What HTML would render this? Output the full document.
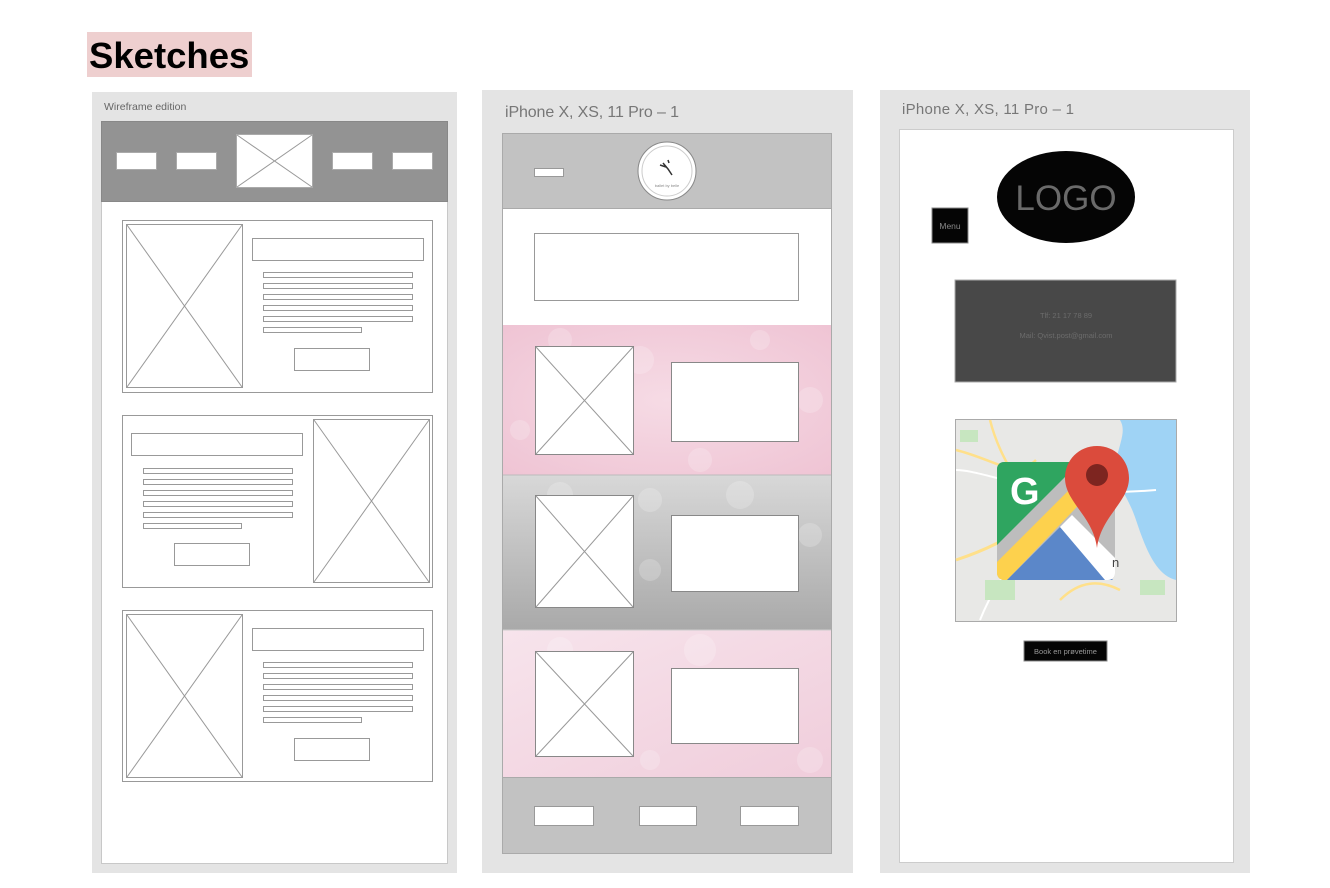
<!DOCTYPE html>
<html><head><meta charset="utf-8"><style>
html,body{margin:0;padding:0;background:#fff;width:1330px;height:888px;overflow:hidden}
svg text{font-family:"Liberation Sans",sans-serif}
</style></head><body>
<svg width="1330" height="888" xmlns="http://www.w3.org/2000/svg">
<defs>
<radialGradient id="pk" cx="50%" cy="50%" r="70%"><stop offset="0" stop-color="#f6dbe5"/><stop offset="1" stop-color="#efc4d4"/></radialGradient>
<linearGradient id="gy" x1="0" y1="0" x2="0" y2="1"><stop offset="0" stop-color="#d8d8d8"/><stop offset="1" stop-color="#a9a9a9"/></linearGradient>
<linearGradient id="pk2" x1="0" y1="0" x2="1" y2="1"><stop offset="0" stop-color="#f7e4ec"/><stop offset="1" stop-color="#f0cddb"/></linearGradient>
</defs>
<rect x="87" y="32" width="165" height="45" fill="#eecfcf"/>
<text x="89" y="68" font-size="36.5" font-weight="bold" fill="#000">Sketches</text>

<rect x="92" y="92" width="365" height="781" fill="#e4e4e4"/>
<text x="104" y="110" font-size="10.5" fill="#666">Wireframe edition</text>
<rect x="101.5" y="121.5" width="346" height="742" fill="#fff" stroke="#c8c8c8"/>
<rect x="101.5" y="121.5" width="346" height="80" fill="#939393" stroke="#888"/>
<g fill="#fff" stroke="#aaa">
<rect x="116.5" y="152.5" width="40" height="17"/><rect x="176.5" y="152.5" width="40" height="17"/>
<rect x="332.5" y="152.5" width="40" height="17"/><rect x="392.5" y="152.5" width="40" height="17"/>
<rect x="236.5" y="134.5" width="76" height="53"/>
</g>
<path d="M237 135L312 187M312 135L237 187" stroke="#999" fill="none"/>
<g fill="none" stroke="#999">
<rect x="122.5" y="220.5" width="310" height="172"/>
<rect x="126.5" y="224.5" width="116" height="163"/><path d="M127 225L242 387M242 225L127 387"/>
<rect x="252.5" y="238.5" width="171" height="22"/>
<rect x="263.5" y="272.5" width="149" height="5"/><rect x="263.5" y="283.5" width="149" height="5"/><rect x="263.5" y="294.5" width="149" height="5"/><rect x="263.5" y="305.5" width="149" height="5"/><rect x="263.5" y="316.5" width="149" height="5"/><rect x="263.5" y="327.5" width="98" height="5"/>
<rect x="294.5" y="348.5" width="75" height="22"/>
<rect x="122.5" y="415.5" width="310" height="172"/>
<rect x="313.5" y="419.5" width="116" height="163"/><path d="M314 420L429 582M429 420L314 582"/>
<rect x="131.5" y="433.5" width="171" height="22"/>
<rect x="143.5" y="468.5" width="149" height="5"/><rect x="143.5" y="479.5" width="149" height="5"/><rect x="143.5" y="490.5" width="149" height="5"/><rect x="143.5" y="501.5" width="149" height="5"/><rect x="143.5" y="512.5" width="149" height="5"/><rect x="143.5" y="523.5" width="98" height="5"/>
<rect x="174.5" y="543.5" width="75" height="22"/>
<rect x="122.5" y="610.5" width="310" height="171"/>
<rect x="126.5" y="614.5" width="116" height="163"/><path d="M127 615L242 777M242 615L127 777"/>
<rect x="252.5" y="628.5" width="171" height="22"/>
<rect x="263.5" y="662.5" width="149" height="5"/><rect x="263.5" y="673.5" width="149" height="5"/><rect x="263.5" y="684.5" width="149" height="5"/><rect x="263.5" y="695.5" width="149" height="5"/><rect x="263.5" y="706.5" width="149" height="5"/><rect x="263.5" y="717.5" width="98" height="5"/>
<rect x="294.5" y="738.5" width="75" height="22"/>
</g>

<rect x="482" y="90" width="371" height="783" fill="#e4e4e4"/>
<text x="505" y="117" font-size="16" fill="#777" textLength="174">iPhone X, XS, 11 Pro – 1</text>
<rect x="502.5" y="133.5" width="329" height="720" fill="#fff" stroke="#aaa"/>
<rect x="502.5" y="133.5" width="329" height="75" fill="#c2c2c2" stroke="#aaa"/>
<rect x="534.5" y="168.5" width="29" height="8" fill="#fff" stroke="#999"/>
<circle cx="667" cy="171" r="29" fill="#fff" stroke="#888"/>
<circle cx="667" cy="171" r="25" fill="none" stroke="#ccc"/>
<path d="M663 163l5 6 4 6M660 165l6 2M668 160l1 3" stroke="#333" stroke-width="1.5" fill="none"/>
<text x="667" y="187" font-size="4" fill="#888" text-anchor="middle">ballet by belle</text>
<rect x="534.5" y="233.5" width="264" height="67" fill="#fff" stroke="#999"/>
<rect x="503" y="325" width="328" height="150" fill="url(#pk)"/>
<rect x="503" y="475" width="328" height="155" fill="url(#gy)"/>
<rect x="503" y="630" width="328" height="147" fill="url(#pk2)"/>
<g fill="#fff" opacity=".2">
<circle cx="560" cy="340" r="12"/><circle cx="640" cy="360" r="14"/><circle cx="700" cy="460" r="12"/><circle cx="810" cy="400" r="13"/><circle cx="760" cy="340" r="10"/><circle cx="520" cy="430" r="10"/>
<circle cx="560" cy="495" r="13"/><circle cx="650" cy="500" r="12"/><circle cx="740" cy="495" r="14"/><circle cx="810" cy="535" r="12"/><circle cx="650" cy="570" r="11"/>
<circle cx="560" cy="650" r="13"/><circle cx="700" cy="650" r="16"/><circle cx="810" cy="760" r="13"/><circle cx="650" cy="760" r="10"/>
</g>
<line x1="503" y1="475" x2="831" y2="475" stroke="#bbb"/>
<line x1="503" y1="630" x2="831" y2="630" stroke="#ccc"/>
<g fill="#fff" stroke="#888">
<rect x="535.5" y="346.5" width="98" height="108"/><rect x="671.5" y="362.5" width="127" height="79"/>
<rect x="535.5" y="495.5" width="98" height="112"/><rect x="671.5" y="515.5" width="127" height="76"/>
<rect x="535.5" y="651.5" width="98" height="105"/><rect x="671.5" y="668.5" width="127" height="75"/>
</g>
<g stroke="#999" fill="none">
<path d="M536 347L633 454M633 347L536 454M536 496L633 607M633 496L536 607M536 652L633 756M633 652L536 756"/>
</g>
<rect x="502.5" y="777.5" width="329" height="76" fill="#c2c2c2" stroke="#aaa"/>
<g fill="#fff" stroke="#999">
<rect x="534.5" y="806.5" width="59" height="19"/><rect x="639.5" y="806.5" width="57" height="19"/><rect x="740.5" y="806.5" width="58" height="19"/>
</g>

<rect x="880" y="90" width="370" height="783" fill="#e4e4e4"/>
<text x="902" y="114" font-size="15" fill="#777" textLength="172">iPhone X, XS, 11 Pro – 1</text>
<rect x="899.5" y="129.5" width="334" height="733" fill="#fff" stroke="#ccc"/>
<ellipse cx="1066" cy="197" rx="69" ry="46" fill="#050505"/>
<text x="1066" y="210" font-size="35" fill="#6a6a6a" text-anchor="middle">LOGO</text>
<rect x="932" y="208" width="36" height="35" fill="#050505" stroke="#888"/>
<text x="950" y="229" font-size="8.5" fill="#888" text-anchor="middle">Menu</text>
<rect x="955" y="280" width="221" height="102" fill="#484848" stroke="#aaa"/>
<text x="1066" y="318" font-size="7.5" fill="#6c6c6c" text-anchor="middle">Tlf: 21 17 78 89</text>
<text x="1066" y="338" font-size="7.5" fill="#6c6c6c" text-anchor="middle">Mail: Qvist.post@gmail.com</text>
<rect x="955.5" y="419.5" width="221" height="202" fill="#e8e8e6" stroke="#aaa"/>
<path d="M1120 420h56v160c-20-5-30-30-40-60s-25-40-20-60 10-30 4-40z" fill="#9fd3f5"/>
<path d="M956 560c30-10 50-20 80-40" stroke="#ffe08a" stroke-width="3" fill="none"/>
<path d="M956 450c40 10 60 30 80 10M990 420c10 40 30 60 40 90M1060 600c20-20 40-20 60-10" stroke="#ffe08a" stroke-width="2.5" fill="none"/>
<path d="M956 470c30 0 80 30 200 20M980 620c20-50 60-100 100-90" stroke="#fff" stroke-width="2" fill="none"/>
<rect x="960" y="430" width="18" height="12" fill="#c7e6c0"/><rect x="985" y="580" width="30" height="20" fill="#c7e6c0"/><rect x="1140" y="580" width="25" height="15" fill="#c7e6c0"/>
<path d="M1004 462h104c4 0 7 3 7 7v104c0 4-3 7-7 7h-104c-4 0-7-3-7-7v-104c0-4 3-7 7-7z" fill="#bdbdbd"/>
<path d="M1004 462h76l-83 83v-76c0-4 3-7 7-7z" fill="#2fa560"/>
<path d="M997 562l86-86 12 12-88 92h-3c-4 0-7-3-7-7z" fill="#fdd14d"/>
<path d="M1007 580l53-53 53 53z" fill="#5b87c9"/>
<path d="M1060 527l12-12 43 43v15c0 4-3 7-7 7h-3z" fill="#fff"/>
<text x="1010" y="504" font-size="38" font-weight="bold" fill="#fff">G</text>
<path d="M1097 446c-18 0-32 14-32 32 0 24 28 38 32 70 4-32 32-46 32-70 0-18-14-32-32-32z" fill="#db4b3c"/>
<circle cx="1097" cy="475" r="11" fill="#7d2520"/>
<text x="1112" y="567" font-size="13" fill="#444">n</text>
<rect x="1024" y="641" width="83" height="20" fill="#050505" stroke="#888"/>
<text x="1065.5" y="654" font-size="7.5" fill="#999" text-anchor="middle">Book en prøvetime</text>
</svg>
</body></html>
